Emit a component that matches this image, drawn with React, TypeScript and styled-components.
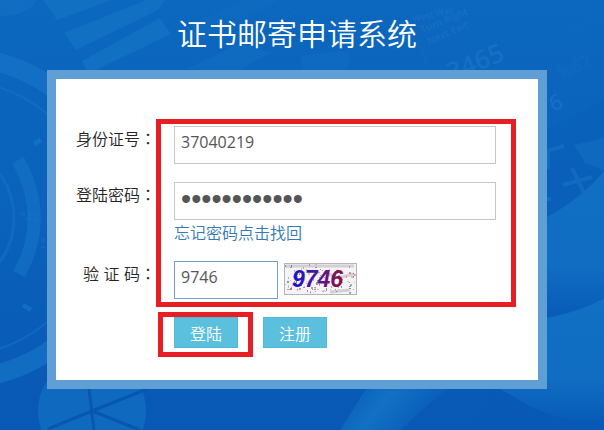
import React from "react";
import styled, { createGlobalStyle, css } from "styled-components";

const GlobalStyle = createGlobalStyle`
  * { box-sizing: border-box; }
  body {
    margin: 0;
    background: #0a60b9;
    font-family: "Open Sans", "Noto Sans CJK SC", sans-serif;
    font-size: 16px;
    color: #262626;
  }
`;

const Page = styled.main`
  position: relative;
  min-height: 100vh;
  overflow: hidden;
  padding: 0 57px 41px 47px;
`;

const Backdrop = styled.svg`
  position: absolute;
  inset: 0;
  width: 100%;
  height: 100%;
`;

const Title = styled.h1`
  position: relative;
  margin: 0;
  padding-bottom: 6px;
  line-height: 64px;
  font-family: "Noto Sans CJK SC", sans-serif;
  font-size: 30px;
  font-weight: 350;
  text-align: center;
  color: #fff;
`;

const Card = styled.form`
  position: relative;
  display: grid;
  gap: 18px;
  padding: 47px 42px 32px 0;
  border: 9px solid #5f9fd5;
  background: #fff;
`;

const Highlight = styled.div<{ $kind: "fields" | "action" }>`
  position: relative;
  ${(p) => p.$kind === "fields" && css`display: grid; gap: 18px;`}

  &::after {
    content: "";
    position: absolute;
    inset: ${(p) => (p.$kind === "fields" ? "-7px -20px -8px 100px" : "-5px -15px -9px -16px")};
    border: 5px solid #e81e25;
    pointer-events: none;
  }
`;

const Row = styled.div`
  display: grid;
  grid-template-columns: 118px 1fr;
  align-items: start;
`;

const Label = styled.label`
  padding-right: 18px;
  line-height: 24px;
  text-align: right;
  white-space: nowrap;
  font-weight: 350;
  font-family: "Liberation Sans", "Noto Sans CJK SC", sans-serif;
`;

const Colon = styled.span`
  font-family: "Noto Sans CJK TC", sans-serif;
`;

const Field = styled.div`
  display: flex;
  flex-direction: column;
  align-items: stretch;
`;

const CaptchaField = styled.div`
  display: flex;
  align-items: flex-start;
  gap: 6px;
`;

const Input = styled.input<{ $active?: boolean }>`
  width: 100%;
  height: 38px;
  padding: 0 6px 6px;
  border: 1px solid ${(p) => (p.$active ? "#6fa3cb" : "#c4c6c8")};
  border-radius: 0;
  outline: none;
  background: #fff;
  color: #555;
  font: 16px "Open Sans", sans-serif;

  &[type="password"] {
    padding-bottom: 3px;
    font: 29px "Liberation Sans", sans-serif;
  }
`;

const CodeInput = styled(Input)`
  width: 104px;
`;

const CaptchaImage = styled.svg`
  display: block;
  width: 73px;
  height: 32px;
  margin-top: 2px;
`;

const RecoverLink = styled.a`
  align-self: flex-start;
  padding-top: 2px;
  line-height: 21px;
  font-weight: 350;
  font-family: "Noto Sans CJK SC", sans-serif;
  color: #337ab7;
  text-decoration: none;
`;

const Actions = styled.div`
  display: flex;
  gap: 25px;
  padding-left: 118px;
`;

const Button = styled.button`
  display: block;
  width: 64px;
  height: 31px;
  padding: 0;
  border: 1px solid #4fb9d9;
  background: #5bc0de;
  color: #fff;
  font: 350 16px/28px "Noto Sans CJK SC", sans-serif;
`;

const speckColors = ["#c33", "#393", "#339", "#c93", "#333", "#a5a", "#6a8"];
const noise = (n: number) => {
  const v = Math.sin(n * 12.9898) * 43758.5453;
  return v - Math.floor(v);
};
const specks = Array.from({ length: 130 }, (_, i) => ({
  x: 1 + Math.floor(noise(i + 1) * 70),
  y: 1 + Math.floor(noise(i + 301) * 29),
  color: speckColors[i % speckColors.length],
}));

function Captcha() {
  return (
    <CaptchaImage viewBox="0 0 73 32" role="img" aria-label="9746">
      <defs>
        <linearGradient id="captcha-ink" x1="0" x2="1">
          <stop offset="0" stopColor="#1711d0" />
          <stop offset="0.5" stopColor="#4b17a0" />
          <stop offset="1" stopColor="#901039" />
        </linearGradient>
      </defs>
      <rect x="0.5" y="0.5" width="72" height="31" fill="#f5f3f5" stroke="#b5b5b5" />
      <path d="M2 3H70M40 9l14 6 16-4M46 29l20-2" stroke="#d3d0d4" strokeWidth="3" fill="none" />
      {specks.map((s, i) => (
        <rect key={i} x={s.x} y={s.y} width={i % 4 === 0 ? 2 : 1} height={i % 3 === 0 ? 2 : 1} fill={s.color} opacity="0.5" />
      ))}
      <text x="8" y="24" fill="url(#captcha-ink)" fontFamily="Liberation Sans, sans-serif" fontSize="23" fontWeight="700" fontStyle="italic">
        9746
      </text>
    </CaptchaImage>
  );
}

function Background() {
  return (
    <Backdrop viewBox="0 0 604 430" preserveAspectRatio="xMidYMid slice" aria-hidden="true">
      <defs>
        <linearGradient id="sky" x1="0" y1="0" x2="0" y2="1">
          <stop offset="0" stopColor="#0c67be" />
          <stop offset="0.5" stopColor="#0a62ba" />
          <stop offset="1" stopColor="#0858b5" />
        </linearGradient>
        <linearGradient id="wave" x1="0" y1="0" x2="0" y2="1">
          <stop offset="0" stopColor="#1170c3" />
          <stop offset="0.65" stopColor="#106dc1" />
          <stop offset="1" stopColor="#085bb7" />
        </linearGradient>
        <linearGradient id="beam" x1="0" y1="0" x2="1" y2="0.3">
          <stop offset="0" stopColor="#1271c4" stopOpacity="0" />
          <stop offset="0.45" stopColor="#1271c4" />
          <stop offset="1" stopColor="#1271c4" stopOpacity="0" />
        </linearGradient>
      </defs>
      <rect width="604" height="430" fill="url(#sky)" />
      <g fill="#1473c5" opacity="0.8">
        <path d="M0 0H37Q28 16 0 16Z" opacity="0.7" />
        <path d="M43 0H112L57 20Z" />
        <path d="M64 33L146 0H165L158 10L76 50Z" />
        <path d="M82 61L160 18L171 34L96 70H86Z" />
        <path d="M186 69L240 43L270 53L240 70Z" opacity="0.55" />
        <path d="M190 24L245 0H280L201 42Z" opacity="0.35" />
        <path d="M302 55L348 50Q354 62 345 70H302Z" opacity="0.45" />
      </g>
      <g fill="none" stroke="#1472c4">
        <circle cx="-42" cy="218" r="161" strokeWidth="19" opacity="0.8" />
        <circle cx="-42" cy="218" r="137" strokeWidth="2" opacity="0.65" />
        <circle cx="-60" cy="218" r="74" strokeWidth="3" opacity="0.6" />
        <path d="M18 160Q50 218 19 274" strokeWidth="13" opacity="0.7" />
        <path d="M34 144l7-4M23 305l8 5" strokeWidth="5" opacity="0.8" />
        <path d="M20 214h20M25 219h17M43 238v10" strokeWidth="4" strokeDasharray="5 3" opacity="0.4" />
      </g>
      <circle cx="92" cy="411" r="54" fill="#1271c3" opacity="0.7" />
      <path d="M89 389L94 430M92 411L48 429M92 411L147 389M92 411L140 430" stroke="#0857ae" strokeWidth="3" />
      <path d="M366 389H449Q426 405 401 430H340Z" fill="url(#beam)" />
      <g fill="#2982ce" fontFamily="Open Sans, sans-serif" fontWeight="600" opacity="0.36">
        <text x="413" y="22" fontSize="9" transform="rotate(-14 413 22)">West Way</text>
        <text x="422" y="33" fontSize="10" transform="rotate(-22 422 33)">Turn Right</text>
        <text x="429" y="45" fontSize="10" transform="rotate(-24 429 45)">Next Exit</text>
        <text x="451" y="82" fontSize="26" transform="rotate(-22 451 82)">3465</text>
        <text x="553" y="112" fontSize="22" transform="rotate(-24 553 112)">6</text>
        <text x="560" y="80" fontSize="18" opacity="0.4" transform="rotate(-24 560 80)">%67</text>
      </g>
      <g stroke="#1b78c8" fill="none" opacity="0.25">
        <path d="M409 18l18 46M505 0l9 17M550 43l54-30" />
        <path d="M265 14l35-14M270 18l36-16M276 21l36-16" />
      </g>
      <path d="M547 130L604 100V203Q581 222 547 233Z" fill="#0a5fb7" opacity="0.6" />
      <path d="M574 145L604 138V170L585 163Z" fill="#1471c3" opacity="0.5" />
      <path d="M547 151l17-5M548 151v18M563 185l29-8M572 168l12 25M547 199h4" stroke="#1976c5" strokeWidth="4" opacity="0.5" />
      <path d="M547 217Q582 198 604 171V300Q584 310 547 317Z" fill="url(#wave)" />
      <path d="M547 318Q582 311 604 298V421Q564 424 526 404L500 389H547Z" fill="url(#wave)" />
      <path d="M490 389Q552 434 604 418V430H475Z" fill="#085ab6" opacity="0.75" />
    </Backdrop>
  );
}

export default function App() {
  return (
    <>
      <GlobalStyle />
      <Page>
        <Background />
        <Title>证书邮寄申请系统</Title>
        <Card onSubmit={(e) => e.preventDefault()}>
          <Highlight $kind="fields">
            <Row>
              <Label htmlFor="idno">身份证号<Colon>：</Colon></Label>
              <Input id="idno" type="text" defaultValue="37040219" />
            </Row>
            <Row>
              <Label htmlFor="password">登陆密码<Colon>：</Colon></Label>
              <Field>
                <Input id="password" type="password" defaultValue="123456789012" />
                <RecoverLink href="#recover">忘记密码点击找回</RecoverLink>
              </Field>
            </Row>
            <Row>
              <Label htmlFor="code">验 证 码<Colon>：</Colon></Label>
              <CaptchaField>
                <CodeInput id="code" type="text" defaultValue="9746" $active />
                <Captcha />
              </CaptchaField>
            </Row>
          </Highlight>
          <Actions>
            <Highlight $kind="action">
              <Button type="submit">登陆</Button>
            </Highlight>
            <Button type="button">注册</Button>
          </Actions>
        </Card>
      </Page>
    </>
  );
}
